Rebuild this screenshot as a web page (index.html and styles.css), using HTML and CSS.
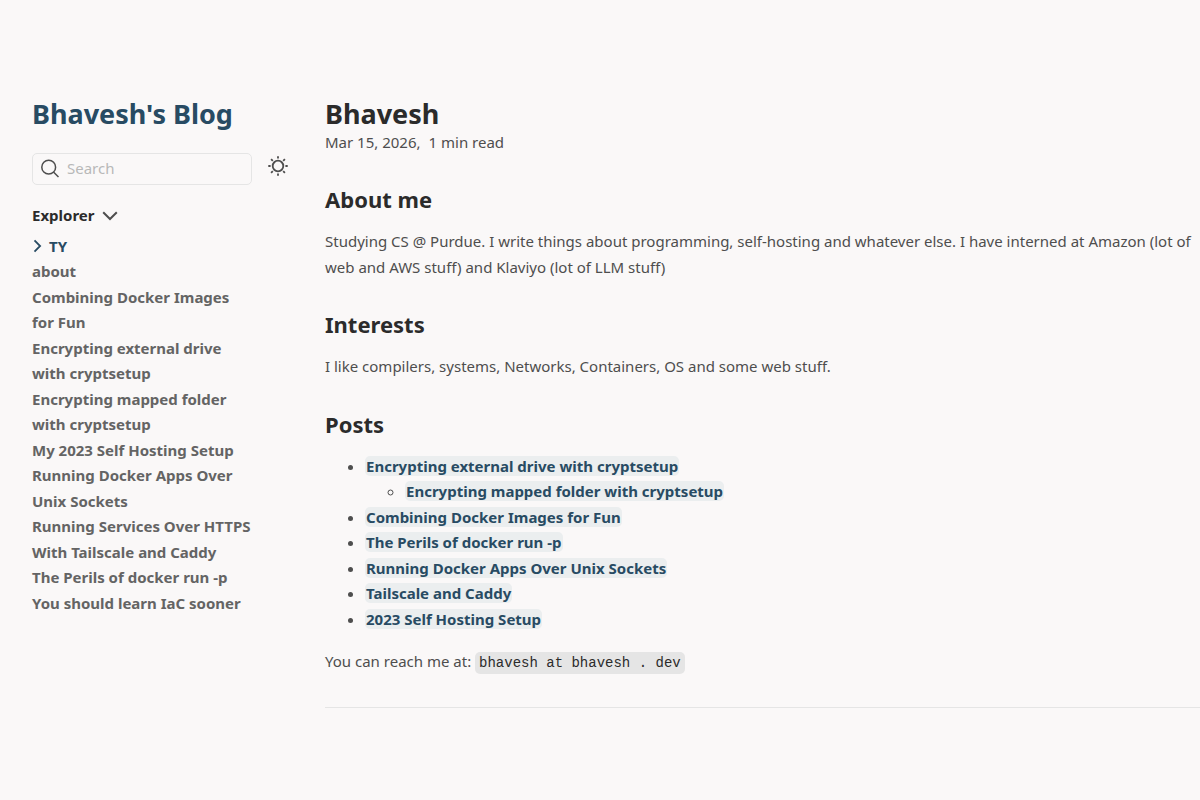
FILE: index.html
```
<!DOCTYPE html>
<html lang="en">
<head>
<meta charset="utf-8">
<meta name="viewport" content="width=device-width, initial-scale=1">
<title>Bhavesh</title>
<link rel="stylesheet" href="styles.css">
</head>
<body>
<div class="page">
  <aside class="sidebar">
    <h2 class="site-title"><a href="#">Bhavesh's Blog</a></h2>
    <div class="tools">
      <div class="search">
        <svg class="search-icon" viewBox="0 0 20 20" aria-hidden="true"><circle cx="8.7" cy="8.2" r="6.9"/><path d="M13.5 13l5 5"/></svg>
        <input class="search-input" type="text" placeholder="Search" aria-label="Search">
      </div>
      <button class="theme-toggle" type="button" aria-label="Toggle theme">
        <svg class="sun-icon" viewBox="0 0 20 20" aria-hidden="true"><circle cx="10" cy="10" r="5.3"/><path d="M10 .3v2.3M10 17.4v2.3M.3 10h2.3M17.4 10h2.3M3.1 3.1l1.7 1.7M15.2 15.2l1.7 1.7M3.1 16.9l1.7-1.7M15.2 4.8l1.7-1.7"/></svg>
      </button>
    </div>
    <nav class="explorer" aria-label="Explorer">
      <button class="explorer-toggle" type="button">Explorer
        <svg class="chevron-down" viewBox="0 0 16 10" aria-hidden="true"><path d="M1.2 1.2L8 8l6.8-6.8"/></svg>
      </button>
      <ul class="explorer-list">
        <li><button class="folder" type="button"><svg class="chevron-right" viewBox="0 0 10 14" aria-hidden="true"><path d="M2 1.4L7.6 7 2 12.6"/></svg>TY</button></li>
        <li><a href="#">about</a></li>
        <li><a href="#">Combining Docker Images for Fun</a></li>
        <li><a href="#">Encrypting external drive with cryptsetup</a></li>
        <li><a href="#">Encrypting mapped folder with cryptsetup</a></li>
        <li><a href="#">My 2023 Self Hosting Setup</a></li>
        <li><a href="#">Running Docker Apps Over Unix Sockets</a></li>
        <li><a href="#">Running Services Over HTTPS With Tailscale and Caddy</a></li>
        <li><a href="#">The Perils of docker run -p</a></li>
        <li><a href="#">You should learn IaC sooner</a></li>
      </ul>
    </nav>
  </aside>
  <main class="content">
    <h1 class="title">Bhavesh</h1>
    <p class="meta"><time datetime="2026-03-15">Mar 15, 2026,</time><span>1 min read</span></p>
    <article class="article">
      <h2>About me</h2>
      <p>Studying CS @ Purdue. I write things about programming, self-hosting and whatever else. I have interned at Amazon (lot of web and AWS stuff) and Klaviyo (lot of LLM stuff)</p>
      <h2>Interests</h2>
      <p>I like compilers, systems, Networks, Containers, OS and some web stuff.</p>
      <h2>Posts</h2>
      <ul class="posts">
        <li><a href="#">Encrypting external drive with cryptsetup</a>
          <ul>
            <li><a href="#">Encrypting mapped folder with cryptsetup</a></li>
          </ul>
        </li>
        <li><a href="#">Combining Docker Images for Fun</a></li>
        <li><a href="#">The Perils of docker run -p</a></li>
        <li><a href="#">Running Docker Apps Over Unix Sockets</a></li>
        <li><a href="#">Tailscale and Caddy</a></li>
        <li><a href="#">2023 Self Hosting Setup</a></li>
      </ul>
      <p>You can reach me at: <code>bhavesh at bhavesh . dev</code></p>
    </article>
    <hr class="rule">
  </main>
</div>
</body>
</html>
```
FILE: styles.css
```
* { box-sizing: border-box; }
body {
  margin: 0;
  background: #faf8f8;
  color: #4e4e4e;
  font-family: "Noto Sans", sans-serif;
  font-size: 15px;
  line-height: 1.7;
}
a { color: inherit; text-decoration: none; }
button { font: inherit; color: inherit; background: none; border: 0; padding: 0; cursor: pointer; }
svg { fill: none; stroke: currentColor; flex: none; }
.page { display: grid; grid-template-columns: 293px minmax(0, 1fr); padding: 96px 0 32px 32px; }
.sidebar { display: flex; flex-direction: column; padding-right: 37px; }
.site-title { margin: 0; font-size: 27px; line-height: 36px; color: #284b63; white-space: nowrap; }
.tools { display: flex; gap: 16px; margin: 21px 0 18px; }
.search { display: flex; flex: 1; align-items: center; min-width: 0; height: 32px; padding-left: 7px; border: 1px solid #e5e5e5; border-radius: 5px; }
.search-icon { width: 20px; height: 20px; stroke-width: 1.5; }
.search-input { flex: 1; min-width: 0; height: 28px; padding: 0 7px 2px; border: 0; outline: 0; background: none; color: #4e4e4e; font: inherit; }
.search-input::placeholder { color: #b8b8b8; opacity: 1; }
.theme-toggle { display: flex; width: 20px; height: 26px; align-items: center; }
.sun-icon { width: 20px; height: 20px; stroke-width: 1.8; }
.explorer { padding-right: 35px; font-weight: 700; }
.explorer-toggle { display: flex; align-items: center; gap: 8px; color: #2b2b2b; }
.chevron-down { width: 16px; height: 10px; stroke: #4e4e4e; stroke-width: 2; }
.explorer-list { margin: 5px 0 0; padding: 0; list-style: none; color: #646464; }
.folder { display: flex; align-items: center; gap: 6px; color: #284b63; }
.chevron-right { width: 11px; height: 14px; stroke-width: 1.8; }
.title { margin: 0; font-size: 27px; line-height: 36px; color: #2b2b2b; }
.meta { display: flex; gap: 8px; margin: 0; padding-bottom: 3px; line-height: 20px; }
.article h2 { margin: 30px 0 16px; font-size: 22px; line-height: 28px; color: #2b2b2b; }
.article p { margin: 0; }
.posts { margin: 0 0 17px; padding-left: 40px; }
.posts ul { padding-left: 40px; }
.posts a { padding: 0 1px; border-radius: 5px; background: #ebeeef; color: #284b63; font-weight: 700; }
.article code { padding: 3px 4px; border-radius: 5px; background: #e5e5e5; color: #2b2b2b; font-family: "Liberation Mono", monospace; font-size: 14px; }
.rule { height: 1px; margin: 31px 0 0; border: 0; background: #e5e5e5; }
```
